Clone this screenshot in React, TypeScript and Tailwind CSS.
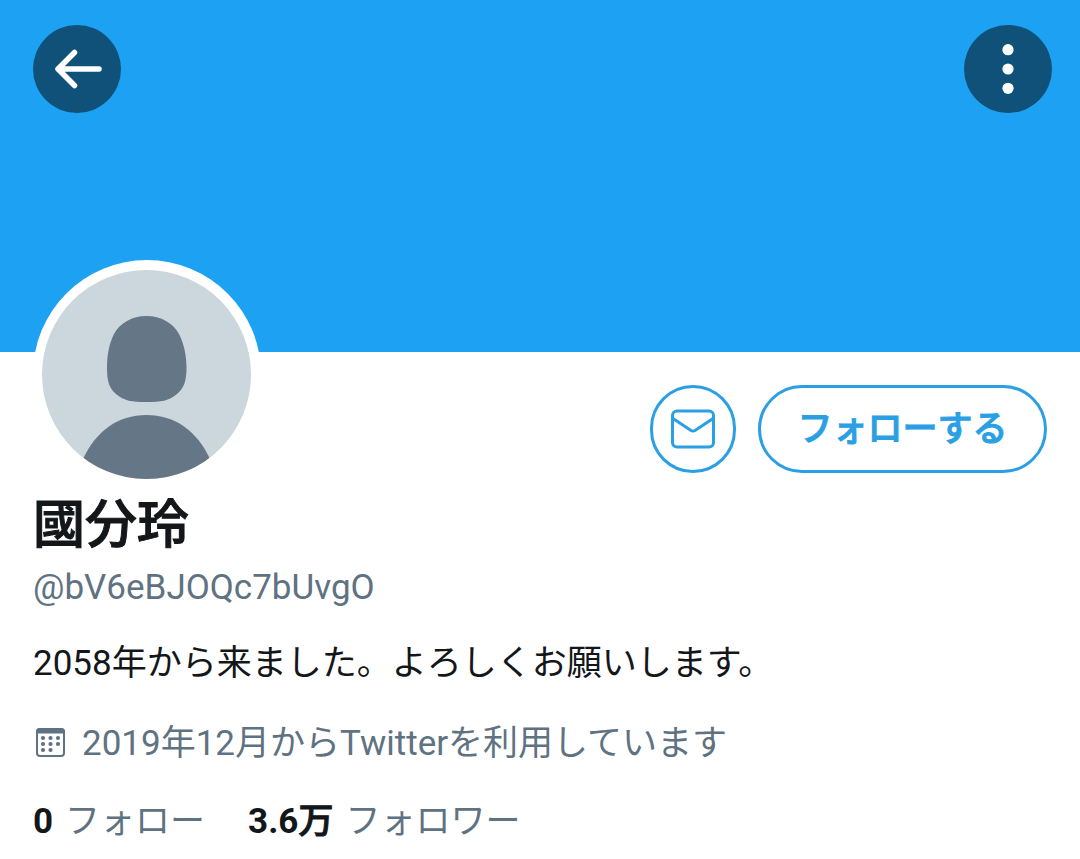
import type { ReactElement } from 'react'

interface StatProps {
  value: string
  unit?: string
  label: string
}

function Stat({ value, unit, label }: StatProps): ReactElement {
  return (
    <a href="#" className="flex items-baseline gap-3 text-[#5f7282]">
      <span className="font-bold text-[#14171a]">
        {value}
        {unit && <span className="font-medium [-webkit-text-stroke:1px]">{unit}</span>}
      </span>
      <span>{label}</span>
    </a>
  )
}

function Avatar(): ReactElement {
  return (
    <div className="-mt-23 h-[228px] w-[228px] flex-shrink-0 rounded-full bg-white p-[9px]">
      <svg viewBox="0 0 210 210" className="h-full w-full" role="img" aria-label="プロフィール画像">
        <clipPath id="avatar-clip">
          <circle cx="104.5" cy="105.5" r="104.5" />
        </clipPath>
        <g clipPath="url(#avatar-clip)">
          <rect width="210" height="210" fill="#ccd6dd" />
          <path
            d="M104.500 47C119 47 131 54 137 65C142 75 144.500 86 144.500 99C144.500 112 142 119 135 125C127 132 119 133 104.500 133C90 133 82 132 74 125C67 119 65 112 65 99C65 86 67 75 72 65C78 54 90 47 104.500 47Z"
            fill="#657786"
          />
          <path d="M41 190C54 162 76 146 104.500 146S155 162 168 190V210H41z" fill="#657786" />
        </g>
      </svg>
    </div>
  )
}

// The last row of days has only two dots.
const calendarDots = [
  [7, 10],
  [14.5, 10],
  [22, 10],
  [7, 16],
  [14.5, 16],
  [22, 16],
  [7, 22],
  [14.5, 22],
]

function CalendarIcon(): ReactElement {
  return (
    <svg viewBox="-3 0 33 33" className="h-[33px] w-[33px]" fill="#5f7282" aria-hidden="true">
      <rect x="1" y="1" width="27" height="27" rx="3" fill="none" stroke="#5f7282" strokeWidth="2" />
      <path d="M0 5.500V4a4 4 0 0 1 4-4h21a4 4 0 0 1 4 4v1.500z" />
      {calendarDots.map(([x, y]) => (
        <circle key={`${x}-${y}`} cx={x} cy={y} r="2.1" />
      ))}
    </svg>
  )
}

export default function App(): ReactElement {
  return (
    <main className="min-h-screen bg-white font-['Roboto','Noto_Sans_CJK_JP',sans-serif] text-[35px] leading-[48px] text-[#14171a]">
      <header className="flex h-[352px] items-start justify-between bg-[#1da1f2] pt-[25px] pr-7 pl-[33px]">
        <button
          type="button"
          aria-label="戻る"
          className="flex h-[88px] w-[88px] items-center justify-center rounded-full bg-[#0f5179]"
        >
          <svg
            viewBox="0 0 88 88"
            className="h-full w-full"
            fill="none"
            stroke="#fff"
            strokeWidth="5.5"
            strokeLinecap="round"
            strokeLinejoin="round"
            aria-hidden="true"
          >
            <path d="M66 44H26M41.500 27.500L25 44l16.500 16.500" />
          </svg>
        </button>
        <button
          type="button"
          aria-label="その他"
          className="flex h-[88px] w-[88px] items-center justify-center rounded-full bg-[#0f5179]"
        >
          <svg viewBox="0 0 88 88" className="h-full w-full" fill="#fff" aria-hidden="true">
            <circle cx="44" cy="24.700" r="5.600" />
            <circle cx="44" cy="44" r="5.600" />
            <circle cx="44" cy="63.300" r="5.600" />
          </svg>
        </button>
      </header>

      <section className="px-[33px]">
        <div className="flex items-start justify-between">
          <Avatar />
          <div className="flex gap-[22px] pt-[33px]">
            <button
              type="button"
              aria-label="メッセージ"
              className="flex h-[88px] w-[86px] items-center justify-center rounded-full border-3 border-[#2b9fe3]"
            >
              <svg
                viewBox="0 0 46 40"
                className="h-[40px] w-[46px]"
                fill="none"
                stroke="#2b9fe3"
                strokeWidth="3"
                strokeLinejoin="round"
                aria-hidden="true"
              >
                <rect x="2.5" y="2" width="41" height="36" rx="4.500" />
                <path d="M3 9.500L21 21.500Q23 22.700 25 21.500L43 9.500" />
              </svg>
            </button>
            <button
              type="button"
              className="h-[88px] w-[289px] rounded-full border-3 border-[#2b9fe3] pt-0.5 font-medium text-[#2b9fe3] [-webkit-text-stroke:1px]"
            >
              フォローする
            </button>
          </div>
        </div>

        <h1 className="mt-[10px] text-[52px] leading-[56px] font-medium [-webkit-text-stroke:1px]">
          國分玲
        </h1>
        <p className="mt-[10px] text-[#5f7282]">@bV6eBJOQc7bUvgO</p>
        <p className="mt-7">2058年から来ました。よろしくお願いします。</p>
        <p className="mt-8 flex items-center gap-4 text-[#5f7282]">
          <CalendarIcon />
          2019年12月からTwitterを利用しています
        </p>
        <div className="mt-[30px] flex gap-[43px]">
          <Stat value="0" label="フォロー" />
          <Stat value="3.6" unit="万" label="フォロワー" />
        </div>
      </section>
    </main>
  )
}
